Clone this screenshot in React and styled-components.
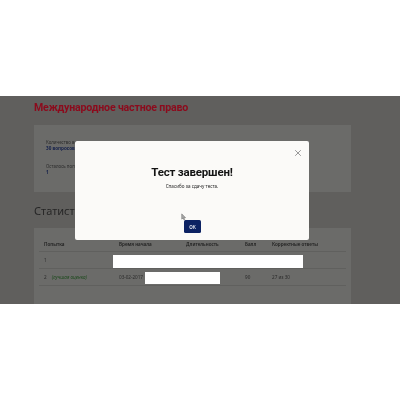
import React from "react";
import styled, { createGlobalStyle } from "styled-components";

const Global = createGlobalStyle`
  html, body { margin: 0; padding: 0; background: #fff; width: 400px; height: 400px; overflow: hidden; }
  body { font-family: "Noto Sans", "Open Sans", sans-serif; }
`;

const Frame = styled.div`
  margin-top: 96px;
  width: 400px;
  height: 208px;
  background: #605f5d;
  position: relative;
  overflow: hidden;
`;
const Content = styled.main`
  display: flex;
  flex-direction: column;
  padding: 4px 49px 0 34px;
  filter: blur(0.5px);
`;
const Title = styled.h1`
  margin: 0;
  font-family: Roboto, sans-serif;
  font-size: 10.6px;
  letter-spacing: -0.17px;
  line-height: 16px;
  font-weight: 700;
  color: #8c0a1c;
  white-space: nowrap;
`;
const SummaryPanel = styled.section`
  margin-top: 9px;
  height: 67px;
  background: #6b6b69;
  padding: 14px 12px 0;
  box-sizing: border-box;
  display: flex;
  flex-direction: column;
  gap: 11px;
`;
const Stat = styled.div`
  display: flex;
  flex-direction: column;
`;
const StatLabel = styled.span`
  font-size: 4.4px;
  line-height: 6px;
  color: #2c2c2c;
  white-space: nowrap;
`;
const StatValue = styled.b`
  font-size: 4.6px;
  line-height: 7px;
  color: #14204a;
  white-space: nowrap;
`;
const SectionTitle = styled.h2`
  margin: 11px 0 0;
  font-size: 11px;
  line-height: 16px;
  font-weight: 400;
  color: #262626;
  white-space: nowrap;
`;
const TablePanel = styled.section`
  margin-top: 9px;
  height: 90px;
  background: #6b6b69;
  padding: 9px 5px 0;
  box-sizing: border-box;
`;
const Row = styled.div`
  display: grid;
  grid-template-columns: 75px 67px 59px 27px 1fr;
  align-items: center;
  box-sizing: border-box;
  height: ${(p) => p.$h}px;
  padding-left: 5px;
  border-bottom: 1px solid #60605e;
  font-size: 4.6px;
  color: #2b2b2b;
  white-space: nowrap;
`;
const Head = styled.span`
  font-weight: 600;
  color: #1f1f1f;
`;
const Best = styled.i`
  margin-left: 5px;
  color: #1d4a1d;
`;
const Redaction = styled.div`
  position: absolute;
  background: #fff;
  top: ${(p) => p.$top}px;
  left: ${(p) => p.$left}px;
  width: ${(p) => p.$w}px;
  height: ${(p) => p.$h}px;
  filter: blur(0.3px);
`;
const Modal = styled.div`
  position: absolute;
  left: 75px;
  top: 45px;
  width: 234px;
  height: 99px;
  background: #fbfaf8;
  border-radius: 2px;
  display: flex;
  flex-direction: column;
  align-items: center;
  padding-top: 22px;
  box-sizing: border-box;
`;
const Close = styled.span`
  position: absolute;
  top: 8px;
  right: 7px;
  width: 8px;
  height: 8px;
  color: #8d8d8d;
  display: flex;
  filter: blur(0.3px);
`;
const ModalTitle = styled.h3`
  margin: 0;
  font-family: Roboto, sans-serif;
  font-size: 11.5px;
  letter-spacing: -0.2px;
  line-height: 18px;
  font-weight: 700;
  color: #141414;
  white-space: nowrap;
  filter: blur(0.4px);
`;
const ModalText = styled.p`
  margin: 2px 0 0;
  font-size: 4.6px;
  line-height: 7px;
  color: #2a2a2a;
  white-space: nowrap;
  filter: blur(0.3px);
`;
const OkButton = styled.button`
  position: absolute;
  left: 184px;
  top: 124px;
  width: 17px;
  height: 13px;
  padding: 0;
  border: 0;
  border-radius: 1.5px;
  background: #0c2263;
  color: #e8ecf5;
  font: 600 4.6px "Noto Sans", sans-serif;
  filter: blur(0.3px);
`;
const Cursor = styled.svg`
  position: absolute;
  left: 181px;
  top: 117px;
  width: 5px;
  height: 8px;
  filter: blur(0.3px);
`;

export default function App() {
  return (
    <>
      <Global />
      <Frame>
        <Content>
          <Title>Международное частное право</Title>
          <SummaryPanel>
            <Stat>
              <StatLabel>Количество вопросов</StatLabel>
              <StatValue>30 вопросов</StatValue>
            </Stat>
            <Stat>
              <StatLabel>Осталось попыток</StatLabel>
              <StatValue>1</StatValue>
            </Stat>
          </SummaryPanel>
          <SectionTitle>Статистика</SectionTitle>
          <TablePanel>
            <Row $h={15}>
              <Head>Попытка</Head>
              <Head>Время начала</Head>
              <Head>Длительность</Head>
              <Head>Балл</Head>
              <Head>Корректные ответы</Head>
            </Row>
            <Row $h={17}>
              <span>1</span>
            </Row>
            <Row $h={17}>
              <span>
                2<Best>(лучшая оценка)</Best>
              </span>
              <span>03-02-2017</span>
              <span />
              <span>90</span>
              <span>27 из 30</span>
            </Row>
          </TablePanel>
        </Content>
        <Redaction $left={113} $top={159} $w={190} $h={13} />
        <Redaction $left={145} $top={176} $w={75} $h={12} />
        <Modal>
          <Close>
            <svg viewBox="0 0 8 8" width="8" height="8" fill="none" stroke="currentColor" strokeWidth="0.9">
              <path d="M1.2 1.2 6.8 6.8M6.8 1.2 1.2 6.8" />
            </svg>
          </Close>
          <ModalTitle>Тест завершен!</ModalTitle>
          <ModalText>Спасибо за сдачу теста.</ModalText>
        </Modal>
        <OkButton>ОК</OkButton>
        <Cursor viewBox="0 0 7 10">
          <path d="M1 .6V8l1.8-1.6L4 9l1.2-.5L4 6h2.4z" fill="#a8a8a8" stroke="#555" strokeWidth=".6" />
        </Cursor>
      </Frame>
    </>
  );
}
